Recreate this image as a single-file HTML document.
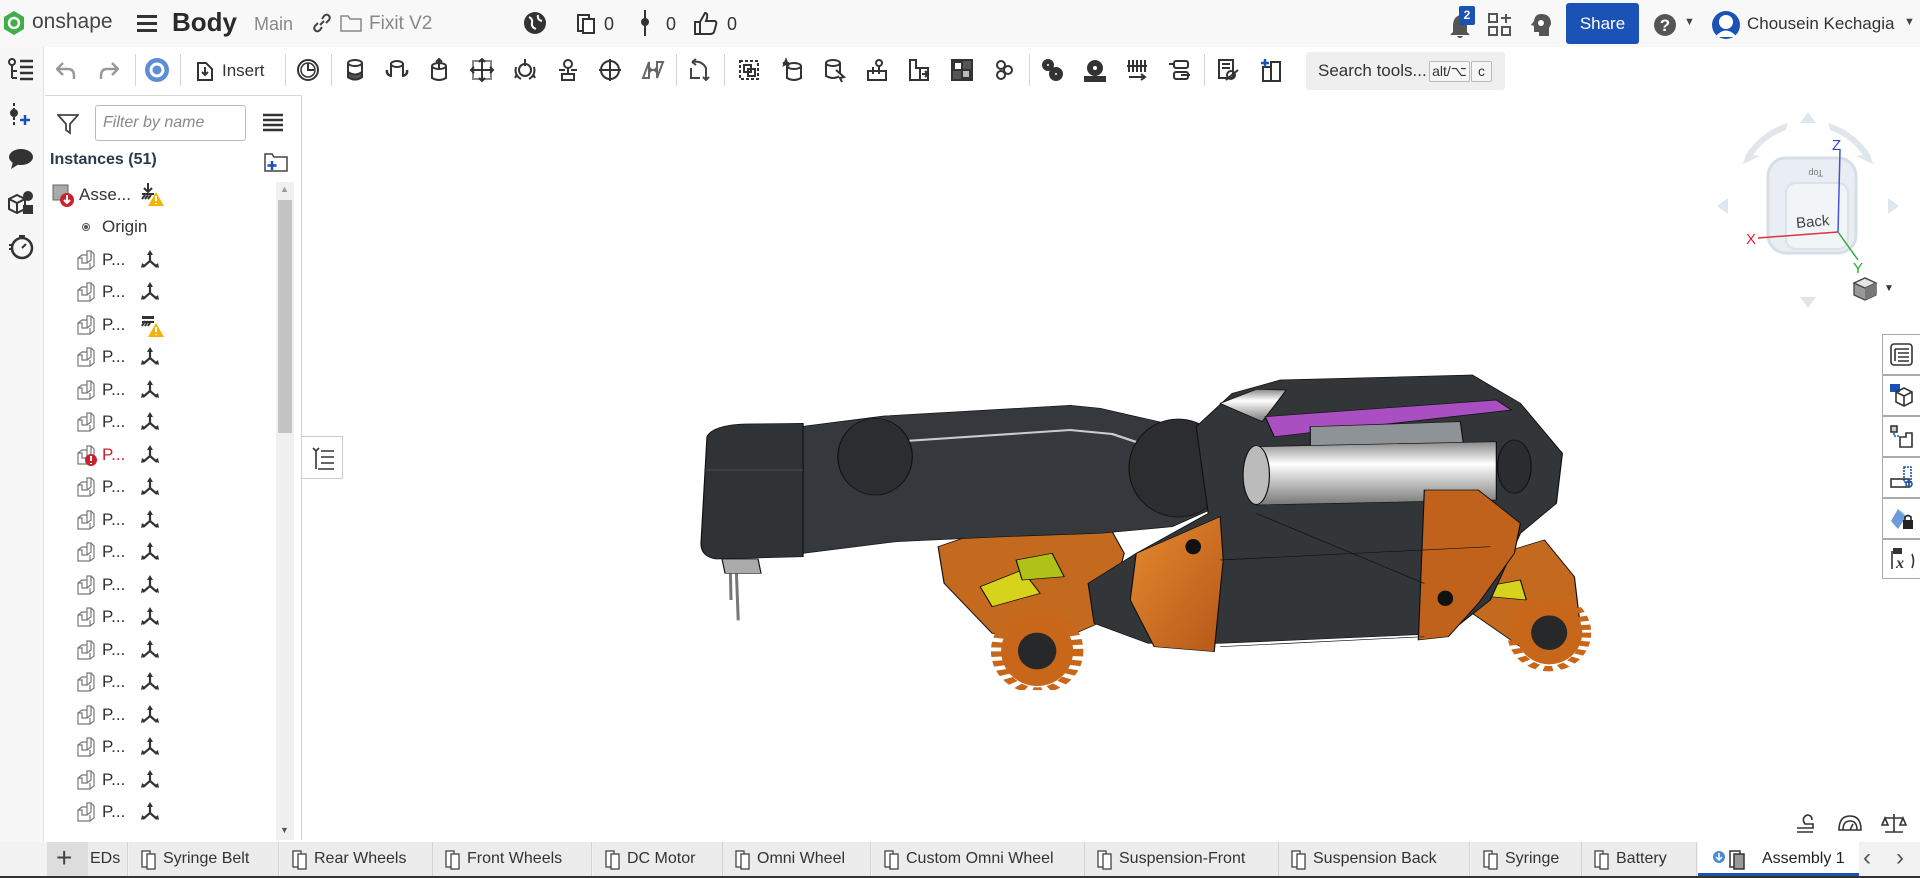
<!DOCTYPE html>
<html><head><meta charset="utf-8"><style>
*{box-sizing:border-box;margin:0;padding:0}
html,body{width:1920px;height:878px;overflow:hidden}
body{background:#fff;font-family:"Liberation Sans",sans-serif;color:#333;position:relative}
.a{position:absolute}
#top{left:0;top:0;width:1920px;height:47px;background:#f8f8f8}
#tb{left:44px;top:47px;width:1876px;height:46px;background:#fff}
#lc{left:0;top:47px;width:44px;height:795px;background:#f7f7f7;border-right:1px solid #e2e2e2}
#panel{left:45px;top:95px;width:257px;height:745px;background:#fff;border-top:1px solid #d8d8d8;border-right:1px solid #d0d0d0;overflow:hidden}
.sep{position:absolute;top:54px;width:1px;height:32px;background:#d6d6d6}
.ti{position:absolute;top:58px;width:24px;height:24px}
.row{position:absolute;left:0;height:30px;font-size:17px;line-height:30px;color:#333}
.tab{position:absolute;top:842px;height:34px;background:#ececec;border-right:1px solid #d4d4d4;font-size:16px;line-height:34px;color:#333;white-space:nowrap;overflow:hidden}
.tab svg{position:absolute;left:12px;top:8px}
.tab span{position:absolute;left:34px}
.rb{position:absolute;left:1882px;width:38px;height:41px;border:1px solid #aaa;border-right:none;background:#fff}
</style></head><body>
<div id="top" class="a"></div>
<svg class="a" style="left:3px;top:10px" width="22" height="26" viewBox="0 0 22 26"><path d="M11 1L21 7V19L11 25L1 19V7Z" fill="#3fae49"/><circle cx="11" cy="13" r="5" fill="none" stroke="#fff" stroke-width="2.5"/></svg>
<div class="a" style="left:32px;top:10px;font-size:21px;color:#444">onshape</div>
<svg class="a" style="left:137px;top:14px" width="20" height="18"><rect y="1" width="20" height="3" fill="#333"/><rect y="8" width="20" height="3" fill="#333"/><rect y="15" width="20" height="3" fill="#333"/></svg>
<div class="a" style="left:172px;top:7px;font-size:26px;font-weight:bold;color:#2a2a2a">Body</div>
<div class="a" style="left:254px;top:14px;font-size:18px;color:#888">Main</div>
<svg class="a" style="left:312px;top:13px" width="20" height="20"><path d="M8 12L12 8M6 10L3 13Q1 16 4 18Q6 19 8 17L10 14M14 10L17 7Q19 4 16 2Q14 1 12 3L10 6" stroke="#444" stroke-width="2" fill="none"/></svg>
<svg class="a" style="left:340px;top:14px" width="22" height="18"><path d="M1 2H8L10 5H21V17H1Z" fill="none" stroke="#888" stroke-width="1.5"/></svg>
<div class="a" style="left:369px;top:13px;font-size:19px;color:#888">Fixit V2</div>
<svg class="a" style="left:523px;top:11px" width="24" height="24"><circle cx="12" cy="12" r="11" fill="#333"/><path d="M6 6Q10 8 9 12T13 18M15 4Q14 9 19 10" stroke="#fff" stroke-width="2" fill="none"/></svg>
<svg class="a" style="left:576px;top:11px" width="20" height="24"><rect x="2" y="4" width="11" height="16" fill="#fff" stroke="#333" stroke-width="2"/><rect x="7" y="8" width="11" height="14" fill="#fff" stroke="#333" stroke-width="2"/></svg>
<div class="a" style="left:604px;top:14px;font-size:18px">0</div>
<svg class="a" style="left:641px;top:10px" width="8" height="26"><circle cx="4" cy="12" r="4" fill="#333"/><rect x="3" y="0" width="2" height="26" fill="#333"/></svg>
<div class="a" style="left:666px;top:14px;font-size:18px">0</div>
<svg class="a" style="left:693px;top:10px" width="26" height="26"><path d="M2 12H7V24H2ZM7 12L12 3Q15 3 14 8L13 11H22Q24 12 23 15L21 22Q20 24 17 24H7" fill="none" stroke="#333" stroke-width="2"/></svg>
<div class="a" style="left:727px;top:14px;font-size:18px">0</div>
<svg class="a" style="left:1449px;top:14px" width="22" height="24"><path d="M11 1Q18 3 18 12V18L21 21H1L4 18V12Q4 3 11 1ZM8 22H14Q13 24 11 24Q9 24 8 22Z" fill="#555"/></svg>
<div class="a" style="left:1459px;top:6px;width:16px;height:19px;background:#1a52b5;color:#fff;font-size:12px;font-weight:bold;text-align:center;line-height:19px;border-radius:2px">2</div>
<svg class="a" style="left:1488px;top:13px" width="24" height="24"><rect x="1" y="1" width="8" height="8" fill="none" stroke="#555" stroke-width="2"/><rect x="1" y="14" width="8" height="8" fill="none" stroke="#555" stroke-width="2"/><rect x="14" y="14" width="8" height="8" fill="none" stroke="#555" stroke-width="2"/><path d="M18 1V10M13 5H23" stroke="#555" stroke-width="2"/></svg>
<svg class="a" style="left:1530px;top:13px" width="22" height="24"><path d="M11 1Q21 1 21 11L19 15V23H9V19H4V13L1 12L4 8Q5 1 11 1Z" fill="#555"/><circle cx="11" cy="10" r="3" fill="#fff"/></svg>
<div class="a" style="left:1566px;top:3px;width:73px;height:41px;background:#1a52b5;border-radius:3px;color:#fff;font-size:17px;text-align:center;line-height:41px">Share</div>
<svg class="a" style="left:1653px;top:13px" width="24" height="24"><circle cx="12" cy="12" r="11" fill="#555"/><text x="12" y="18" fill="#fff" font-size="17" font-weight="bold" text-anchor="middle" font-family="Liberation Sans">?</text></svg>
<div class="a" style="left:1684px;top:16px;font-size:11px;color:#444">▼</div>
<svg class="a" style="left:1711px;top:10px" width="30" height="30"><circle cx="15" cy="15" r="14" fill="#1a52b5"/><circle cx="15" cy="12" r="7" fill="#fff"/><path d="M4 27Q15 14 26 27Z" fill="#fff"/></svg>
<div class="a" style="left:1747px;top:14px;font-size:17px;color:#333">Chousein Kechagia</div>
<div class="a" style="left:1904px;top:16px;font-size:11px;color:#444">▼</div>

<div id="tb" class="a"></div>
<div id="lc" class="a"></div>
<svg class="a" style="left:7px;top:58px" width="28" height="26"><circle cx="5" cy="4" r="3" fill="none" stroke="#333" stroke-width="2"/><path d="M5 7V20M5 13H10M5 20H10" stroke="#333" stroke-width="2"/><path d="M13 3H26M13 9H26M13 15H26M13 21H26" stroke="#333" stroke-width="2.5"/></svg>
<svg class="a" style="left:9px;top:102px" width="24" height="26"><circle cx="5" cy="11" r="4" fill="#333"/><path d="M5 1V7M5 15V25" stroke="#333" stroke-width="2" stroke-dasharray="3 2"/><path d="M16 13V23M11 18H21" stroke="#1a52b5" stroke-width="2.5"/></svg>
<svg class="a" style="left:8px;top:148px" width="26" height="22"><ellipse cx="13" cy="9" rx="12" ry="8" fill="#333"/><path d="M5 14L3 21L11 16Z" fill="#333"/></svg>
<svg class="a" style="left:7px;top:190px" width="28" height="26"><path d="M2 9L10 5L18 9V19L10 23L2 19Z M2 9L10 13L18 9M10 13V23" fill="none" stroke="#333" stroke-width="2"/><circle cx="21" cy="6" r="5" fill="#333"/><rect x="16" y="15" width="10" height="9" fill="#333"/></svg>
<svg class="a" style="left:8px;top:234px" width="26" height="26"><circle cx="14" cy="14" r="10" fill="none" stroke="#333" stroke-width="2.5"/><path d="M11 2H17M14 14L18 10M1 11H5M1 15H5" stroke="#333" stroke-width="2"/></svg>
<svg class="a" style="left:8px;top:852px" width="26" height="22"><circle cx="11" cy="10" r="7" fill="none" stroke="#333" stroke-width="3"/><path d="M16 15L23 21" stroke="#333" stroke-width="3"/><rect x="0" y="4" width="4" height="14" fill="#333"/></svg>

<svg class="a" style="left:56px;top:60px" width="20" height="20"><path d="M7 3L1 9L7 15M1 9H12Q18 9 18 16V19" fill="none" stroke="#999" stroke-width="2.5"/></svg>
<svg class="a" style="left:99px;top:60px" width="20" height="20"><path d="M13 3L19 9L13 15M19 9H8Q2 9 2 16V19" fill="none" stroke="#999" stroke-width="2.5"/></svg>
<div class="sep" style="left:135px"></div>
<svg class="a" style="left:144px;top:57px" width="26" height="26"><circle cx="13" cy="13" r="12" fill="#5b8ed6"/><circle cx="13" cy="13" r="6" fill="none" stroke="#fff" stroke-width="3"/></svg>
<div class="sep" style="left:180px"></div>
<svg class="a" style="left:195px;top:58px" width="20" height="24"><path d="M3 5H11L17 11V22H3Z" fill="none" stroke="#333" stroke-width="2"/><path d="M10 9V17M7 14L10 17L13 14" stroke="#333" stroke-width="2" fill="none"/></svg>
<div class="a" style="left:222px;top:61px;font-size:17px;color:#333">Insert</div>
<div class="sep" style="left:285px"></div>
<svg class="ti" style="left:296px"><circle cx="12" cy="12" r="10" fill="none" stroke="#333" stroke-width="2"/><circle cx="12" cy="12" r="7" fill="none" stroke="#333" stroke-width="1.5"/><path d="M12 5V12H18" stroke="#333" stroke-width="2" fill="none"/></svg>
<div class="sep" style="left:331px"></div>
<div class="sep" style="left:676px"></div>
<div class="sep" style="left:724px"></div>
<div class="sep" style="left:1029px"></div>
<div class="sep" style="left:1204px"></div>
<svg class="a" style="left:0;top:0;pointer-events:none" width="1920" height="100">
<g fill="none" stroke="#333" stroke-width="2">
<g transform="translate(343,58)"><ellipse cx="12" cy="5" rx="7" ry="3"/><path d="M5 5V19Q12 24 19 19V5"/><path d="M5 14Q12 19 19 14V19Q12 24 5 19Z" fill="#555"/></g>
<g transform="translate(385,58)"><ellipse cx="12" cy="6" rx="6" ry="3"/><path d="M6 6V18M18 6V18"/><path d="M2 12Q1 17 7 18M22 12Q23 17 17 18" stroke-width="2.5"/></g>
<g transform="translate(427,58)"><ellipse cx="12" cy="8" rx="7" ry="3"/><path d="M5 8V20Q12 24 19 20V8M12 1V10M9 4L12 1L15 4"/></g>
<g transform="translate(470,58)"><rect x="3" y="3" width="18" height="18" stroke="#888"/><path d="M12 1V23M1 12H23M9 4L12 1L15 4M9 20L12 23L15 20M4 9L1 12L4 15M20 9L23 12L20 15"/></g>
<g transform="translate(513,58)"><circle cx="12" cy="12" r="6"/><path d="M12 1V8M4 16L2 20M20 16L22 20M3 9Q1 17 8 21M21 9Q23 17 16 21"/></g>
<g transform="translate(556,58)"><circle cx="12" cy="6" r="4"/><path d="M6 22H18V16H6ZM12 10V16M3 12H9M15 12H21"/></g>
<g transform="translate(598,58)"><circle cx="12" cy="12" r="9"/><path d="M12 1V23M1 12H23"/></g>
<g transform="translate(641,58)"><path d="M2 20L8 4V20ZM22 4L16 20V4ZM8 12H16M10 10L8 12L10 14M14 10L16 12L14 14" stroke="#666"/></g>
<g transform="translate(688,58)"><path d="M4 4Q14 2 18 10V22M15 19L18 22L21 19M4 4L8 1M4 4L8 7M3 10V20H12" stroke="#444"/></g>
<g transform="translate(737,58)"><rect x="3" y="3" width="18" height="18" stroke-dasharray="3 2"/><rect x="7" y="7" width="7" height="7"/><rect x="11" y="11" width="7" height="7"/></g>
<g transform="translate(780,58)"><ellipse cx="14" cy="8" rx="7" ry="3"/><path d="M7 8V20Q14 24 21 20V8"/><path d="M6 2L8 7L3 5H9L4 7Z" fill="#333"/></g>
<g transform="translate(822,58)"><ellipse cx="11" cy="5" rx="7" ry="3"/><path d="M4 5V18Q11 22 18 18V5"/><path d="M14 12L22 19L18 20L20 24" fill="#fff"/></g>
<g transform="translate(865,58)"><rect x="3" y="13" width="18" height="9"/><circle cx="14" cy="5" r="3"/><path d="M14 8V16M8 9V16"/></g>
<g transform="translate(907,58)"><path d="M3 2H9V10H13V22H3ZM11 10H21V22H11"/><path d="M15 16H21M18 13L21 16L18 19"/></g>
<g transform="translate(950,58)"><rect x="2" y="2" width="20" height="20" fill="#555"/><rect x="4" y="4" width="8" height="8" fill="#fff"/><rect x="12" y="12" width="8" height="8" fill="#bbb"/></g>
<g transform="translate(992,58)"><circle cx="9" cy="7" r="4"/><circle cx="16" cy="12" r="4"/><circle cx="9" cy="17" r="4"/></g>
<g transform="translate(1040,58)" fill="#333"><circle cx="8" cy="7" r="5"/><circle cx="16" cy="16" r="6"/><circle cx="8" cy="7" r="2" fill="#fff"/><circle cx="16" cy="16" r="2" fill="#fff"/></g>
<g transform="translate(1083,58)" fill="#333"><circle cx="12" cy="10" r="7"/><circle cx="12" cy="10" r="3" fill="#fff"/><rect x="2" y="19" width="20" height="4"/></g>
<g transform="translate(1125,58)"><path d="M4 2V14M8 2V14M12 2V14M16 2V14M20 2V14M2 8H22M4 19H20M16 16L20 19L16 22"/></g>
<g transform="translate(1168,58)"><rect x="6" y="3" width="14" height="7" rx="2"/><rect x="6" y="14" width="14" height="7" rx="2"/><path d="M1 6H6M13 17H22"/></g>
<g transform="translate(1216,58)"><rect x="3" y="2" width="14" height="18"/><path d="M6 6H14M6 10H14M10 22L22 12"/><circle cx="15" cy="17" r="4"/></g>
<g transform="translate(1259,58)"><rect x="4" y="9" width="8" height="14"/><rect x="12" y="4" width="9" height="19"/><path d="M6 1V9M2 5H10" stroke="#1a52b5" stroke-width="2.5"/></g>
</g></svg>
<div class="a" style="left:1306px;top:52px;width:199px;height:38px;background:#efefef;border-radius:3px"></div>
<div class="a" style="left:1318px;top:61px;font-size:17px;color:#333">Search tools...</div>
<div class="a" style="left:1429px;top:61px;width:41px;height:21px;border:1px solid #bbb;border-radius:2px;background:#f6f6f6;font-size:14px;line-height:19px;text-align:center">alt/⌥</div>
<div class="a" style="left:1471px;top:61px;width:21px;height:21px;border:1px solid #bbb;border-radius:2px;background:#f6f6f6;font-size:14px;line-height:19px;text-align:center">c</div>

<div id="panel" class="a">
<svg class="a" style="left:12px;top:17px" width="22" height="22"><path d="M1 2H21L13 11V20L9 17V11Z" fill="none" stroke="#444" stroke-width="1.8"/></svg>
<div class="a" style="left:50px;top:9px;width:151px;height:36px;border:1px solid #bbb;border-radius:3px;font-size:16px;font-style:italic;color:#888;padding:8px 0 0 7px">Filter by name</div>
<svg class="a" style="left:218px;top:17px" width="20" height="20"><path d="M0 2H20M0 7H20M0 12H20M0 17H20" stroke="#333" stroke-width="2.5"/></svg>
<div class="a" style="left:5px;top:55px;font-size:16px;font-weight:bold;color:#2a3a4a">Instances (51)</div>
<svg class="a" style="left:219px;top:56px" width="24" height="20"><path d="M1 2H8L10 5H23V19H1Z" fill="none" stroke="#444" stroke-width="1.5"/><path d="M8 9V18M3.5 13.5H12.5" stroke="#1a52b5" stroke-width="2.5"/></svg>
<div class="a" style="left:231px;top:86px;width:18px;height:658px;background:#f0f0f0"></div>
<div class="a" style="left:233px;top:104px;width:14px;height:233px;background:#c4c4c4"></div>
<div class="a" style="left:235px;top:88px;font-size:9px;color:#999">▲</div>
<div class="a" style="left:235px;top:729px;font-size:9px;color:#555">▼</div>
<div id="rows"></div>
</div>
<div class="a" style="left:302px;top:436px;width:41px;height:43px;border:1px solid #ccc;border-left:none;background:#fff"></div>
<svg class="a" style="left:310px;top:445px" width="26" height="26"><path d="M3 3L6 6L9 3M6 6V24M11 6H24M11 12H24M11 18H24M8 24H24" stroke="#333" stroke-width="1.6" fill="none"/></svg>

<svg class="a" style="left:1708px;top:110px" width="210" height="200">
<g fill="#dfe6ec"><path d="M100 2L92 13H108Z"/><path d="M100 198L92 187H108Z"/><path d="M9 96L20 88V104Z"/><path d="M191 96L180 88V104Z"/><path d="M38 44Q55 20 80 13L78 20Q58 27 45 45L52 46L35 54Z"/><path d="M162 44Q145 20 120 13L122 20Q142 27 155 45L148 46L165 54Z"/></g>
<rect x="60" y="48" width="88" height="95" rx="18" fill="#e8eef3" stroke="#d6dfe6" stroke-width="3"/>
<rect x="78" y="73" width="62" height="66" rx="10" fill="#f2f5f8" stroke="#dbe3ea" stroke-width="2"/>
<text x="88" y="117" font-size="15" fill="#444" transform="rotate(-5 100 112)" font-family="Liberation Sans">Back</text>
<text x="95" y="66" font-size="9" fill="#777" font-family="Liberation Sans" transform="rotate(180 105 63)">Top</text>
<path d="M130 122L132 40" stroke="#4455dd" stroke-width="1.5"/>
<path d="M130 122L50 128" stroke="#dd3344" stroke-width="1.5"/>
<path d="M130 122L150 150" stroke="#33aa44" stroke-width="1.5"/>
<text x="124" y="40" fill="#3344cc" font-size="15" font-family="Liberation Sans">Z</text>
<text x="38" y="134" fill="#dd2233" font-size="15" font-family="Liberation Sans">X</text>
<text x="145" y="163" fill="#22aa33" font-size="15" font-family="Liberation Sans">Y</text>
</svg>
<svg class="a" style="left:1852px;top:276px" width="26" height="26"><path d="M13 2L24 7V19L13 24L2 19V7Z" fill="#999" stroke="#444" stroke-width="1.3"/><path d="M2 7L13 12L24 7L13 2Z" fill="#e6e6e6" stroke="#444" stroke-width="1.3"/><path d="M13 12V24L24 19V7Z" fill="#777"/></svg>
<div class="a" style="left:1884px;top:283px;font-size:10px;color:#333">▼</div>

<div class="rb" style="top:334px"></div><div class="rb" style="top:375px"></div><div class="rb" style="top:416px"></div><div class="rb" style="top:457px"></div><div class="rb" style="top:498px"></div><div class="rb" style="top:539px;height:40px;border-bottom:1px solid #aaa"></div>
<svg class="a" style="left:1885px;top:334px;pointer-events:none" width="35" height="245" fill="none" stroke="#333" stroke-width="1.6">
<g transform="translate(5,9)"><rect x="1" y="1" width="21" height="21" rx="3"/><path d="M5 6H19M8 10H19M8 14H19M8 18H19M5 6V18"/></g>
<g transform="translate(5,50)"><rect x="0" y="0" width="10" height="8" fill="#1a52b5" stroke="none"/><path d="M6 8L14 4L22 8V18L14 22L6 18Z M6 8L14 12L22 8M14 12V22"/></g>
<g transform="translate(5,91)"><rect x="1" y="1" width="6" height="6" fill="#ccc"/><path d="M4 8V11H10" stroke="#1a52b5" stroke-dasharray="2 1"/><path d="M10 12H16V8H22V22H10Z"/></g>
<g transform="translate(5,132)"><rect x="14" y="1" width="7" height="15" stroke="#1a52b5" stroke-dasharray="2 1"/><rect x="1" y="13" width="18" height="8"/><circle cx="19" cy="18" r="3" stroke="#1a52b5"/></g>
<g transform="translate(5,173)" stroke="none"><path d="M8 2L16 10L8 22L1 14Z" fill="#6b9bd8"/><path d="M8 2L14 6L16 10Z" fill="#a8d0f0"/><rect x="13" y="13" width="10" height="9" fill="#222"/><path d="M15 13V10Q18 7 21 10V13" stroke="#222" fill="none" stroke-width="1.6"/></g>
<g transform="translate(4,214)"><rect x="4" y="0" width="9" height="6" fill="#333" stroke="none"/><path d="M3 3V21M23 6Q26 13 23 20"/><text x="7" y="20" font-size="16" font-style="italic" font-weight="bold" fill="#333" stroke="none" font-family="Liberation Serif">x</text></g>
</svg>

<svg class="a" style="left:1795px;top:812px" width="120" height="22" fill="none" stroke="#333" stroke-width="1.6">
<path d="M2 16H18V12H10Q6 6 12 3Q17 3 17 8M2 20H18"/>
<path d="M44 18Q44 4 55 4Q66 4 66 18ZM48 18Q48 9 55 9Q62 9 62 18M55 18L58 12"/>
<path d="M99 2V20M90 20H108M90 6H108M90 6L87 13H93ZM108 6L105 13H111Z"/>
</svg>

<!-- robot -->
<svg class="a" style="left:680px;top:360px" width="940" height="330" viewBox="0 0 1566 990" preserveAspectRatio="none">
<defs>
<linearGradient id="sil" x1="0" y1="0" x2="0" y2="1"><stop offset="0" stop-color="#888"/><stop offset="0.35" stop-color="#fff"/><stop offset="1" stop-color="#777"/></linearGradient>
<linearGradient id="or" x1="0" y1="0" x2="1" y2="1"><stop offset="0" stop-color="#e68a2e"/><stop offset="1" stop-color="#b5581a"/></linearGradient>
</defs>
<g stroke="#111" stroke-width="2">
<path d="M430 560L560 480L700 450L740 580L710 780L620 850L520 820L440 670Z" fill="#c46a1f"/>
<path d="M500 680L570 630L600 700L520 740Z" fill="#d7d21c"/>
<path d="M560 600L620 580L640 650L570 660Z" fill="#b0c21a"/>
<path d="M1330 600L1440 540L1490 650L1500 800L1400 860L1320 760Z" fill="#c46a1f"/>
<path d="M1340 680L1400 660L1410 720L1350 710Z" fill="#d7d21c"/>
<path d="M200 200L340 168L650 136L700 145L870 215L910 300L895 440L820 500L700 520L540 530L360 545L205 580Z" fill="#35383c"/>
<path d="M360 245L650 210L720 222L850 300" fill="none" stroke="#c8cdd2" stroke-width="6"/>
<path d="M45 230Q55 195 110 192L205 190V590L60 597Q35 590 35 550Z" fill="#303336"/>
<path d="M40 330H205" fill="none" stroke="#555"/>
<ellipse cx="325" cy="290" rx="62" ry="115" fill="#2b2d30"/>
<ellipse cx="830" cy="324" rx="82" ry="147" fill="#2b2d30"/>
<path d="M70 597L130 597L135 640H75Z" fill="#aaa"/>
<path d="M860 200L920 100L1000 60L1320 45L1400 130L1470 280L1460 430L1400 520L1350 720L1280 820L900 850L780 850L690 790L680 670L760 580L820 520L880 460Z" fill="#333639"/>
<path d="M900 130L960 88L1010 90L970 185Z" fill="url(#sil)"/>
<path d="M975 170L1360 120L1385 150L990 230Z" fill="#a94fc2"/>
<path d="M1050 200L1300 185L1305 250L1050 265Z" fill="#8e9398"/>
<path d="M960 260L1360 245L1360 420L960 435Z" fill="url(#sil)"/>
<ellipse cx="960" cy="345" rx="22" ry="88" fill="#bbb"/>
<ellipse cx="1390" cy="320" rx="28" ry="80" fill="#2a2c2f"/>
<path d="M760 580L830 525L900 470L905 600L890 875L790 860L750 720Z" fill="url(#or)"/>
<path d="M1240 390L1330 390L1400 490L1390 580L1330 730L1280 830L1230 840Z" fill="#c0621c"/>
<path d="M900 600L1350 560M900 860L1240 830M960 460L1240 670" fill="none" stroke="#111"/>
<ellipse cx="855" cy="560" rx="12" ry="22" fill="#111"/>
<ellipse cx="1275" cy="715" rx="12" ry="22" fill="#111"/>
</g>
<ellipse cx="595" cy="873" rx="60" ry="105" fill="#c8661a"/>
<ellipse cx="595" cy="873" rx="68" ry="118" fill="none" stroke="#c8661a" stroke-width="18" stroke-dasharray="16 12"/>
<ellipse cx="595" cy="873" rx="32" ry="55" fill="#26282a"/>
<ellipse cx="1448" cy="818" rx="55" ry="95" fill="#c8661a"/>
<ellipse cx="1448" cy="818" rx="62" ry="108" fill="none" stroke="#c8661a" stroke-width="16" stroke-dasharray="15 11"/>
<ellipse cx="1448" cy="818" rx="30" ry="52" fill="#26282a"/>
<path d="M94 640L97 781M84 640L85 720" stroke="#777" stroke-width="5"/>
</svg>

<div class="a" style="left:0;top:842px;width:1920px;height:34px;background:#f2f2f2"></div>
<div class="a" style="left:47px;top:842px;width:41px;height:34px;background:#ddd"></div>
<div class="a" style="left:56px;top:842px;font-size:28px;line-height:32px;color:#444">+</div>
<div class="tab" style="left:88px;width:40px"><span style="left:2px">EDs</span></div>
<div id="tabs"></div>
<div class="a" style="left:1698px;top:842px;width:161px;height:34px;background:#fff;border-bottom:3px solid #1a52b5"></div>
<svg class="a" style="left:1712px;top:848px" width="40" height="22"><circle cx="7" cy="9" r="6" fill="#4a8ad6"/><path d="M7 5V12M4 9L7 12L10 9" stroke="#fff" stroke-width="1.5" fill="none"/><rect x="18" y="3" width="10" height="16" fill="#fff" stroke="#333" stroke-width="1.5"/><rect x="22" y="6" width="10" height="15" fill="#999" stroke="#333" stroke-width="1.5"/></svg>
<div class="a" style="left:1762px;top:842px;font-size:16px;line-height:34px;color:#222">Assembly 1</div>
<div class="a" style="left:1863px;top:842px;font-size:24px;line-height:32px;color:#555">‹</div>
<div class="a" style="left:1896px;top:842px;font-size:24px;line-height:32px;color:#555">›</div>
<div class="a" style="left:0;top:876px;width:1920px;height:2px;background:#333"></div>

<script>
var h='';
var ys=[194,226,259,291,324,356,389,421,454,486,519,551,584,616,649,681,714,746,779,811];
for(var i=0;i<ys.length;i++){var y=ys[i]-95-15;
 if(i==0){h+='<svg class="a" style="left:6px;top:'+(y+3)+'px" width="26" height="26"><rect x="2" y="2" width="15" height="15" fill="#aaa" stroke="#666"/><circle cx="16" cy="17" r="7" fill="#c8232c"/><path d="M16 12V20M13 17L16 20L19 17" stroke="#fff" stroke-width="2" fill="none"/></svg><div class="row" style="left:34px;top:'+y+'px">Asse...</div>'+
  '<svg class="a" style="left:95px;top:'+(y+2)+'px" width="26" height="26"><path d="M8 1V9M4 6L8 10L12 6M2 12H14M2 17L5 13M5 17L8 13M8 17L11 13" stroke="#333" stroke-width="2" fill="none"/><path d="M16 10L24 24H8Z" fill="#f5b400"/><path d="M16 14V19M16 21V22" stroke="#fff" stroke-width="2"/></svg>';continue;}
 if(i==1){h+='<div class="a" style="left:37px;top:'+(y+11)+'px;width:8px;height:8px;border:1px solid #555;border-radius:50%"><div style="width:4px;height:4px;margin:1px;background:#555;border-radius:50%"></div></div><div class="row" style="left:57px;top:'+y+'px">Origin</div>';continue;}
 var red=(i==8);
 h+='<svg class="a" style="left:31px;top:'+(y+5)+'px" width="22" height="22"><path d="M2 8L6 5H11V1H15L18 4V16L14 19H2ZM2 8H6V13H11V5M11 13L15 10V1M14 19V13" fill="#fff" stroke="#777" stroke-width="1.2"/>'+(red?'<circle cx="15" cy="15" r="6" fill="#c8232c"/><path d="M15 11V16M15 18V19" stroke="#fff" stroke-width="2"/>':'')+'</svg>';
 h+='<div class="row" style="left:57px;top:'+y+'px;'+(red?'color:#c8232c':'')+'">P...</div>';
 if(i==4){h+='<svg class="a" style="left:95px;top:'+(y+3)+'px" width="26" height="26"><rect x="2" y="3" width="12" height="3" fill="#333"/><path d="M2 13L5 8M5 13L8 8M8 13L11 8M2 9H14" stroke="#333" stroke-width="2"/><path d="M16 10L24 24H8Z" fill="#f5b400"/><path d="M16 14V19M16 21V22" stroke="#fff" stroke-width="2"/></svg>';}
 else h+='<svg class="a" style="left:95px;top:'+(y+5)+'px" width="20" height="20"><path d="M10 2V11L3 17M10 11L17 17" stroke="#333" stroke-width="2.2" fill="none"/><path d="M10 0L7 5H13ZM1 18L2 13L6 16ZM19 18L18 13L14 16Z" fill="#333"/></svg>';
}
document.getElementById('rows').innerHTML=h;
var ic='<svg width="20" height="20"><rect x="1" y="1" width="8" height="16" fill="#fff" stroke="#444" stroke-width="1.3"/><rect x="6" y="4" width="8" height="15" fill="#fff" stroke="#444" stroke-width="1.3"/></svg>';
var T=[["Syringe Belt",129,277],["Rear Wheels",280,431],["Front Wheels",433,590],["DC Motor",593,721],["Omni Wheel",723,869],["Custom Omni Wheel",872,1083],["Suspension-Front",1085,1277],["Suspension Back",1279,1468],["Syringe",1471,1580],["Battery",1582,1695]];
var t='';for(var j=0;j<T.length;j++){t+='<div class="tab" style="left:'+T[j][1]+'px;width:'+(T[j][2]-T[j][1]+2)+'px">'+ic+'<span>'+T[j][0]+'</span></div>';}
document.getElementById('tabs').innerHTML=t;
</script>
</body></html>
